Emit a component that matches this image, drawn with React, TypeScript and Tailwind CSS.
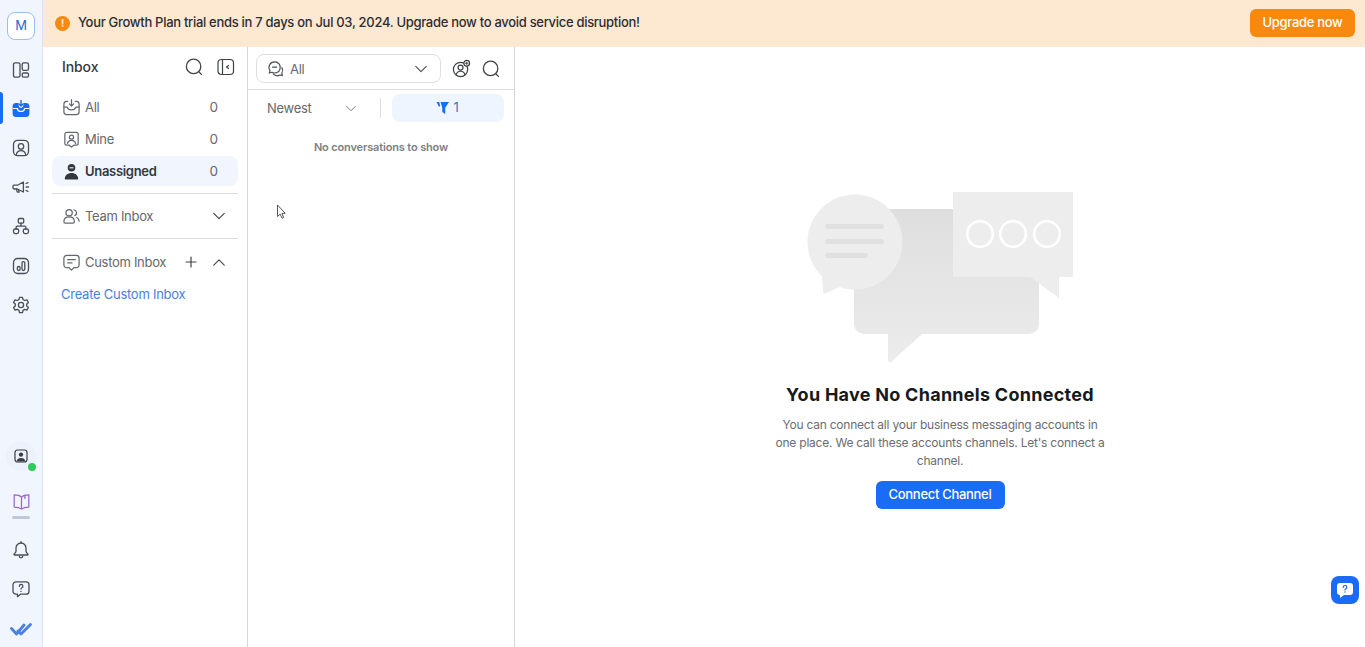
import { ReactNode } from "react";

const Svg = ({ children, size = 20, className = "" }: { children: ReactNode; size?: number; className?: string }) => (
  <svg width={size} height={size} viewBox="0 0 20 20" fill="none" stroke="currentColor" strokeWidth="1.3" strokeLinecap="round" strokeLinejoin="round" className={className}>
    {children}
  </svg>
);

const Chevron = ({ up = false, className = "" }: { up?: boolean; className?: string }) => (
  <svg viewBox="0 0 16 9" fill="none" stroke="currentColor" strokeWidth="1.3" strokeLinecap="round" strokeLinejoin="round" className={className}>
    <path d={up ? "M2 8L8 2l6 6" : "M2 1.5l6 6 6-6"} />
  </svg>
);

const SearchIcon = () => (
  <svg width="18" height="18" viewBox="0 0 18 18" fill="none" stroke="#3f4349" strokeWidth="1.3" strokeLinecap="round">
    <circle cx="8.6" cy="8.4" r="7.2" />
    <path d="M14 14l2.4 2.4" />
  </svg>
);

const RailItem = ({ children, active = false }: { children: ReactNode; active?: boolean }) => (
  <div className={`relative flex h-[39.2px] items-center justify-center ${active ? "text-[#1a6bf5]" : "text-[#4a4e55]"}`}>
    {active && <span className="absolute left-0 top-[3px] h-[32px] w-[3px] rounded-r bg-[#1a6bf5]" />}
    {children}
  </div>
);

const Row = ({ label, icon, active = false }: { label: string; icon: ReactNode; active?: boolean }) => (
  <div className={`flex h-[30px] items-center rounded-lg pl-[10px] pr-[20px] ${active ? "bg-[#f1f5fd] font-semibold text-[#34383e]" : "text-[#64686e]"}`}>
    <span className="flex w-[23px] justify-start">{icon}</span>
    <span className="mt-[2px] text-[13px] tracking-[-0.3px]">{label}</span>
    <span className="ml-auto text-[13.5px] font-normal text-[#64686e]">0</span>
  </div>
);

export default function App() {
  return (
    <div className="relative flex h-[647px] w-full overflow-hidden bg-white font-['Inter',sans-serif]">
      {/* Left rail */}
      <aside className="flex w-[43px] shrink-0 flex-col border-r border-[#d9e4f5] bg-[#f0f5fe]">
        <div className="flex justify-center pt-3 pb-[10px]">
          <div className="flex h-7 w-7 items-center justify-center rounded-lg border border-[#9dbcf0] bg-white text-[13px] text-[#2468d8]">M</div>
        </div>
        <RailItem>
          <Svg>
            <rect x="2.5" y="2.8" width="6.5" height="14.4" rx="1.6" />
            <rect x="11.2" y="2.8" width="6.3" height="7.6" rx="1.6" />
            <rect x="11.2" y="13" width="6.3" height="4.2" rx="1.4" />
          </Svg>
        </RailItem>
        <RailItem active>
          <svg width="20" height="20" viewBox="0 0 20 20">
            <path d="M5 4h2.6v2.6a2.4 2.4 0 0 0 4.8 0V4H15a3.4 3.4 0 0 1 3.4 3v7.6A3.4 3.4 0 0 1 15 18H5a3.4 3.4 0 0 1-3.4-3.4V7A3.4 3.4 0 0 1 5 4z" fill="#1a6bf5" />
            <path d="M10 1.5v5M8 5l2 2 2-2" stroke="#1a6bf5" strokeWidth="1.4" fill="none" strokeLinecap="round" />
            <path d="M1.8 9.5h4.4c.5 2 2 3 3.8 3s3.3-1 3.8-3h4.4" stroke="#fff" strokeWidth="1.2" fill="none" />
          </svg>
        </RailItem>
        <RailItem>
          <Svg>
            <rect x="2.5" y="2.3" width="15" height="15.4" rx="4.2" />
            <circle cx="10" cy="8.4" r="2.7" />
            <path d="M5.2 17c.5-3 2.4-4.4 4.8-4.4s4.3 1.4 4.8 4.4" />
          </Svg>
        </RailItem>
        <RailItem>
          <Svg>
            <path d="M3 8.2h3.4L12.4 5v10L6.4 12H3a1.2 1.2 0 0 1-1-1.2V9.4a1.2 1.2 0 0 1 1-1.2z" />
            <path d="M5.5 12.2l.8 3h1.8l-.6-2.5" />
            <path d="M15 6.5l2-.8M15.2 10h2.3M15 13.5l2 .8" />
          </Svg>
        </RailItem>
        <RailItem>
          <Svg>
            <rect x="7.3" y="2.5" width="5.4" height="4.6" rx="1" />
            <rect x="2.5" y="13" width="5.2" height="4.6" rx="1.8" />
            <rect x="12.3" y="13" width="5.2" height="4.6" rx="1.8" />
            <path d="M10 7.1v3M5.1 13v-1.4a1.4 1.4 0 0 1 1.4-1.5h7a1.4 1.4 0 0 1 1.4 1.5V13" />
          </Svg>
        </RailItem>
        <RailItem>
          <Svg>
            <rect x="2.5" y="2.5" width="15" height="15" rx="4.2" />
            <rect x="6.3" y="10.5" width="2.8" height="4" rx="1.4" />
            <rect x="11" y="5.6" width="2.8" height="8.9" rx="1.4" />
          </Svg>
        </RailItem>
        <RailItem>
          <Svg>
            <circle cx="10" cy="10" r="2.6" />
            <path d="M8.5 2.3h3l.5 2.2 1.7 1 2.2-.7 1.5 2.6-1.7 1.5v2.1l1.7 1.5-1.5 2.6-2.2-.7-1.7 1-.5 2.2h-3l-.5-2.2-1.7-1-2.2.7-1.5-2.6 1.7-1.5V8.9L2.6 7.4l1.5-2.6 2.2.7 1.7-1z" />
          </Svg>
        </RailItem>

        <div className="mt-auto flex flex-col items-center pb-[10px]">
          <div className="relative flex h-[30px] w-[30px] items-center justify-center rounded-full bg-[#ecf1fc] text-[#3a3e44]">
            <svg width="14" height="14" viewBox="0 0 14 14">
              <rect x="1" y="1" width="12" height="12" rx="2.5" fill="none" stroke="currentColor" strokeWidth="1.2" />
              <circle cx="7" cy="5.6" r="2.2" fill="currentColor" />
              <path d="M2.5 12.5c.4-2.5 2.2-3.5 4.5-3.5s4.1 1 4.5 3.5z" fill="currentColor" />
            </svg>
            <span className="absolute right-0 bottom-0 h-[8px] w-[8px] rounded-full bg-[#2ecb5b]" />
          </div>
          <div className="mt-[21px] text-[#9a66cf]">
            <Svg size={19}>
              <path d="M10 5.2C8.3 3.7 5.8 3 2.3 3v12.8c3.5 0 5.9.7 7.7 2.2 1.8-1.5 4.2-2.2 7.7-2.2V3c-3.5 0-6 .7-7.7 2.2zM10 5.2V18" />
              <path d="M13.6 3.5v3.3" />
            </Svg>
          </div>
          <span className="mt-[5px] h-[3.5px] w-[18px] rounded-full bg-[#bfc7d6]" />
          <div className="mt-[21px] text-[#4a4e55]">
            <Svg>
              <path d="M10 3a5 5 0 0 0-5 5v3.2c0 1-.9 2-1.8 2.800-.4.4-.2 1 .4 1h12.800c.6 0 .8-.6.4-1-.9-.8-1.800-1.800-1.800-2.800V8a5 5 0 0 0-5-5z" />
              <path d="M10 1.600V3M8.200 16c0 1 .8 1.800 1.800 1.800s1.800-.8 1.800-1.800" />
            </Svg>
          </div>
          <div className="mt-[19px] text-[#4a4e55]">
            <Svg>
              <path d="M5 2.800h10a3 3 0 0 1 3 3v6.400a3 3 0 0 1-3 3H9.500l-3 2.500v-2.500H5a3 3 0 0 1-3-3V5.800a3 3 0 0 1 3-3z" />
              <path d="M8.300 7.300A1.800 1.800 0 1 1 10.600 9c-.4.200-.6.500-.6 1" />
              <path d="M10 12.300v.1" />
            </Svg>
          </div>
          <div className="mt-[23px]">
            <svg width="22" height="15" viewBox="0 0 22 15" fill="none" stroke="#4a80e6" strokeWidth="2.8" strokeLinecap="round" strokeLinejoin="round">
              <path d="M1.5 6.5l5 5.5L14 3" />
              <path d="M8 9l3 3 9.5-9.5" />
            </svg>
          </div>
        </div>
      </aside>

      <div className="flex min-w-0 flex-1 flex-col">
        {/* Trial banner */}
        <header className="flex h-[47px] shrink-0 items-center bg-[#fde8d2] pb-[1px] pl-[12px] pr-[10px]">
          <span className="flex h-[15px] w-[15px] items-center justify-center rounded-full bg-[#f8890f] text-[11px] font-bold text-[#fde8d2]">!</span>
          <p className="ml-[8px] text-[13px] font-medium tracking-[-0.3px] text-[#2c2e33]">
            Your Growth Plan trial ends in 7 days on Jul 03, 2024. Upgrade now to avoid service disruption!
          </p>
          <button className="ml-auto h-[28px] w-[105px] rounded-md bg-[#f8890f] text-[13px] font-medium tracking-[-0.3px] text-white">Upgrade now</button>
        </header>

        <div className="flex min-h-0 flex-1">
          {/* Inbox column */}
          <section className="w-[205px] shrink-0 border-r border-[#d5d7db] px-[9px]">
            <div className="flex h-[40px] items-center pl-[10px] pr-[3px]">
              <h2 className="mb-[2px] text-[14px] font-medium tracking-[-0.1px] text-[#34383e]">Inbox</h2>
              <span className="ml-auto flex"><SearchIcon /></span>
              <svg className="ml-[14px]" width="18" height="18" viewBox="0 0 18 18" fill="none" stroke="#3f4349" strokeWidth="1.2" strokeLinecap="round" strokeLinejoin="round">
                <rect x="1" y="1.5" width="15.5" height="15" rx="3.5" />
                <path d="M5.5 1.5v15M11.5 7.5L9.5 9l2 1.5" />
              </svg>
            </div>
            <div className="mt-[5px] flex flex-col gap-[2px]">
              <Row
                label="All"
                icon={
                  <Svg size={19}>
                    <path d="M6 3.5H5A3 3 0 0 0 2 6.5v8a3 3 0 0 0 3 3h10a3 3 0 0 0 3-3v-8a3 3 0 0 0-3-3h-1" />
                    <path d="M10 1.8v6.4M7.8 6.2L10 8.4l2.2-2.2M2 9.5h3.5c.5 2 2.2 3 4.5 3s4-1 4.5-3H18" />
                  </Svg>
                }
              />
              <Row
                label="Mine"
                icon={
                  <Svg size={19}>
                    <path d="M5 2.5h10a2 2 0 0 1 2 2V14a2 2 0 0 1-2 2h-2.500L10 18l-2.500-2H5a2 2 0 0 1-2-2V4.500a2 2 0 0 1 2-2z" />
                    <circle cx="10" cy="7.5" r="2.2" />
                    <path d="M5.8 14c.4-2.2 2.2-3.2 4.2-3.2s3.8 1 4.2 3.2" />
                  </Svg>
                }
              />
              <Row
                active
                label="Unassigned"
                icon={
                  <svg width="19" height="19" viewBox="0 0 17 17" fill="#34383e">
                    <path d="M8.5 1.8a3.4 3.4 0 1 1 0 6.8 3.4 3.4 0 0 1 0-6.8z" />
                    <path d="M2.5 15c0-3.2 2.7-5.2 6-5.2s6 2 6 5.2a.7.7 0 0 1-.7.7H3.2a.7.7 0 0 1-.7-.7z" />
                    <path d="M6.8 5.2h3.4" stroke="#f1f5fd" strokeWidth="1" />
                  </svg>
                }
              />
            </div>
            <div className="mt-[7px] border-t border-[#dcdee2]" />
            <div className="flex h-[44px] items-center pl-[10px] pr-[12px] text-[#64686e]">
              <span className="flex w-[23px]">
                <Svg size={19}>
                  <circle cx="7.5" cy="6" r="3.3" />
                  <path d="M2 15.5c0-3 2.2-5 5.5-5s5.5 2 5.5 5c0 1-.8 1.5-1.5 1.5h-8C2.8 17 2 16.5 2 15.5z" />
                  <path d="M12.5 2.900a3.300 3.300 0 0 1 1 6.200M15.500 11c1.500.8 2.500 2 2.500 4" />
                </Svg>
              </span>
              <span className="mt-[2px] text-[13px] tracking-[-0.3px]">Team Inbox</span>
              <Chevron className="ml-auto h-[8px] w-[14px] text-[#3f4349]" />
            </div>
            <div className="border-t border-[#dcdee2]" />
            <div className="flex h-[46px] items-center pl-[10px] pr-[12px] text-[#64686e]">
              <span className="flex w-[23px]">
                <Svg size={19}>
                  <path d="M5 2.5h10a3 3 0 0 1 3 3v7a3 3 0 0 1-3 3h-2.500L10 18l-2.500-2.500H5a3 3 0 0 1-3-3v-7a3 3 0 0 1 3-3z" />
                  <path d="M6 7h8M6 10.500h4.500" />
                </Svg>
              </span>
              <span className="mt-[2px] text-[13px] tracking-[-0.3px]">Custom Inbox</span>
              <svg className="ml-auto text-[#3f4349]" width="12" height="12" viewBox="0 0 12 12" stroke="currentColor" strokeWidth="1.2" strokeLinecap="round">
                <path d="M6 1v10M1 6h10" />
              </svg>
              <Chevron up className="ml-[15px] h-[8px] w-[14px] text-[#3f4349]" />
            </div>
            <a className="ml-[9px] block text-[13px] tracking-[-0.26px] text-[#4a7fe0]">Create Custom Inbox</a>
          </section>

          {/* Conversations column */}
          <section className="w-[267px] shrink-0 border-r border-[#d5d7db]">
            <div className="flex h-[43px] items-center gap-[11px] border-b border-[#dcdee2] pl-[8px] pr-[12px] pt-[1px]">
              <div className="flex h-[29px] w-[185px] items-center rounded-lg border border-[#dcdee2] pl-[10px] pr-[12px]">
                <Svg size={18} className="text-[#4a4e55]">
                  <path d="M8.500 2a6.200 6.200 0 1 1-3 11.600l-3 .9.800-2.800A6.200 6.200 0 0 1 8.500 2z" />
                  <path d="M6.300 8h4.400" />
                  <path d="M16.600 8.500a6.200 6.200 0 0 1-.1 6.300l.6 2.500-2.600-.7a6.200 6.200 0 0 1-7.600-1.200" />
                </Svg>
                <span className="ml-[5px] mt-[2px] text-[13px] tracking-[-0.3px] text-[#64686e]">All</span>
                <Chevron className="ml-auto h-[8px] w-[14px] text-[#4a4e55]" />
              </div>
              <Svg size={19} className="text-[#3f4349]">
                <circle cx="9" cy="11" r="7.5" />
                <circle cx="9" cy="9" r="2.6" />
                <path d="M4.500 16.500c.5-2.500 2.200-3.600 4.500-3.600s4 1.100 4.500 3.600" />
                <circle cx="15.5" cy="4.5" r="3" fill="#fff" />
                <path d="M15.500 3.200v2.600M14.200 4.500h2.600" strokeWidth="1" />
              </Svg>
              <span className="flex"><SearchIcon /></span>
            </div>
            <div className="flex h-[35px] items-center pl-[19px] pr-[10px] pt-[1px]">
              <span className="mt-[2px] text-[13px] tracking-[-0.3px] text-[#64686e]">Newest</span>
              <Chevron className="ml-[34px] h-[7px] w-[12px] text-[#73777d]" />
              <span className="ml-[23px] h-[20px] w-px bg-[#dcdee2]" />
              <div className="ml-[11px] flex h-[28px] w-[112px] items-center justify-center gap-[4px] rounded-lg bg-[#eff5fe] pr-[2px] text-[13px] text-[#4a6fb0]">
                <svg width="14" height="14" viewBox="0 0 14 14" fill="#1a6bf5">
                  <path d="M4.600 1H13L9.200 6.700V13L6.300 11V7z" />
                  <path d="M.5 1h2.700l.9 3.400-1 1.600z" />
                </svg>
                1
              </div>
            </div>
            <p className="mt-[14px] text-center text-[11px] font-semibold tracking-[-0.15px] text-[#7c7f85]">No conversations to show</p>
          </section>

          {/* Empty state */}
          <main className="flex min-w-0 flex-1 flex-col items-center pt-[145px]">
            <svg width="267" height="171" viewBox="807 192 267 171">
              <defs>
                <linearGradient id="bubble" x1="0" y1="0" x2="0" y2="1">
                  <stop offset="0" stopColor="#dedede" />
                  <stop offset="1" stopColor="#ececec" />
                </linearGradient>
              </defs>
              <path d="M864 209h165a10 10 0 0 1 10 10v105a10 10 0 0 1-10 10h-107l-31 28c-1.500 1-3 0-3-2v-26h-24a10 10 0 0 1-10-10V219a10 10 0 0 1 10-10z" fill="url(#bubble)" />
              <path d="M822 276l1 16c0 1.500 1 2 2 1.500l16-7z" fill="#ededed" />
              <circle cx="855" cy="242" r="47.5" fill="#ededed" />
              <rect x="825" y="224" width="59" height="5" rx="2.5" fill="#e0e0e0" />
              <rect x="825" y="239" width="59" height="5" rx="2.5" fill="#e0e0e0" />
              <rect x="825" y="253" width="43" height="5" rx="2.5" fill="#e0e0e0" />
              <path d="M953 192h120v85h-14v21l-29-21h-77z" fill="#ededed" />
              <circle cx="980" cy="234" r="12.8" fill="none" stroke="#fff" strokeWidth="2.6" />
              <circle cx="1013" cy="234" r="12.8" fill="none" stroke="#fff" strokeWidth="2.6" />
              <circle cx="1047" cy="234" r="12.8" fill="none" stroke="#fff" strokeWidth="2.6" />
            </svg>
            <h1 className="mt-[18px] text-[18px] font-bold tracking-[0.27px] text-[#17191c]">You Have No Channels Connected</h1>
            <p className="mt-[8px] w-[332px] text-center text-[12px] leading-[18px] tracking-[-0.22px] text-[#6a6d72]">
              You can connect all your business messaging accounts in one place. We call these accounts channels. Let's connect a channel.
            </p>
            <button className="mt-[11px] h-[28px] w-[129px] rounded-md bg-[#1a6bf5] text-[13px] font-medium tracking-[-0.3px] text-white">Connect Channel</button>
          </main>
        </div>
      </div>

      {/* Help launcher */}
      <button className="absolute left-[1331px] top-[576px] flex h-[28px] w-[28px] items-center justify-center rounded-lg bg-[#1a6bf5]">
        <svg width="20" height="20" viewBox="0 0 20 20">
          <path d="M5 3h10a3 3 0 0 1 3 3v6a3 3 0 0 1-3 3H9l-4 3v-3a3 3 0 0 1-3-3V6a3 3 0 0 1 3-3z" fill="#fff" />
          <path d="M8.200 7.500A1.800 1.800 0 1 1 10.500 9c-.4.200-.5.500-.5 1" stroke="#1a6bf5" strokeWidth="1.2" fill="none" strokeLinecap="round" />
          <circle cx="10" cy="12" r=".7" fill="#1a6bf5" />
        </svg>
      </button>

      {/* Captured mouse pointer */}
      <svg className="absolute left-[276px] top-[204px]" width="11" height="16" viewBox="0 0 11 16" fill="#fff" stroke="#3f4349" strokeWidth="0.9" strokeLinejoin="round">
        <path d="M1.500 1v11.500l2.700-2.300 1.800 4 1.700-.8-1.800-3.900 3.300-.2z" />
      </svg>
    </div>
  );
}
